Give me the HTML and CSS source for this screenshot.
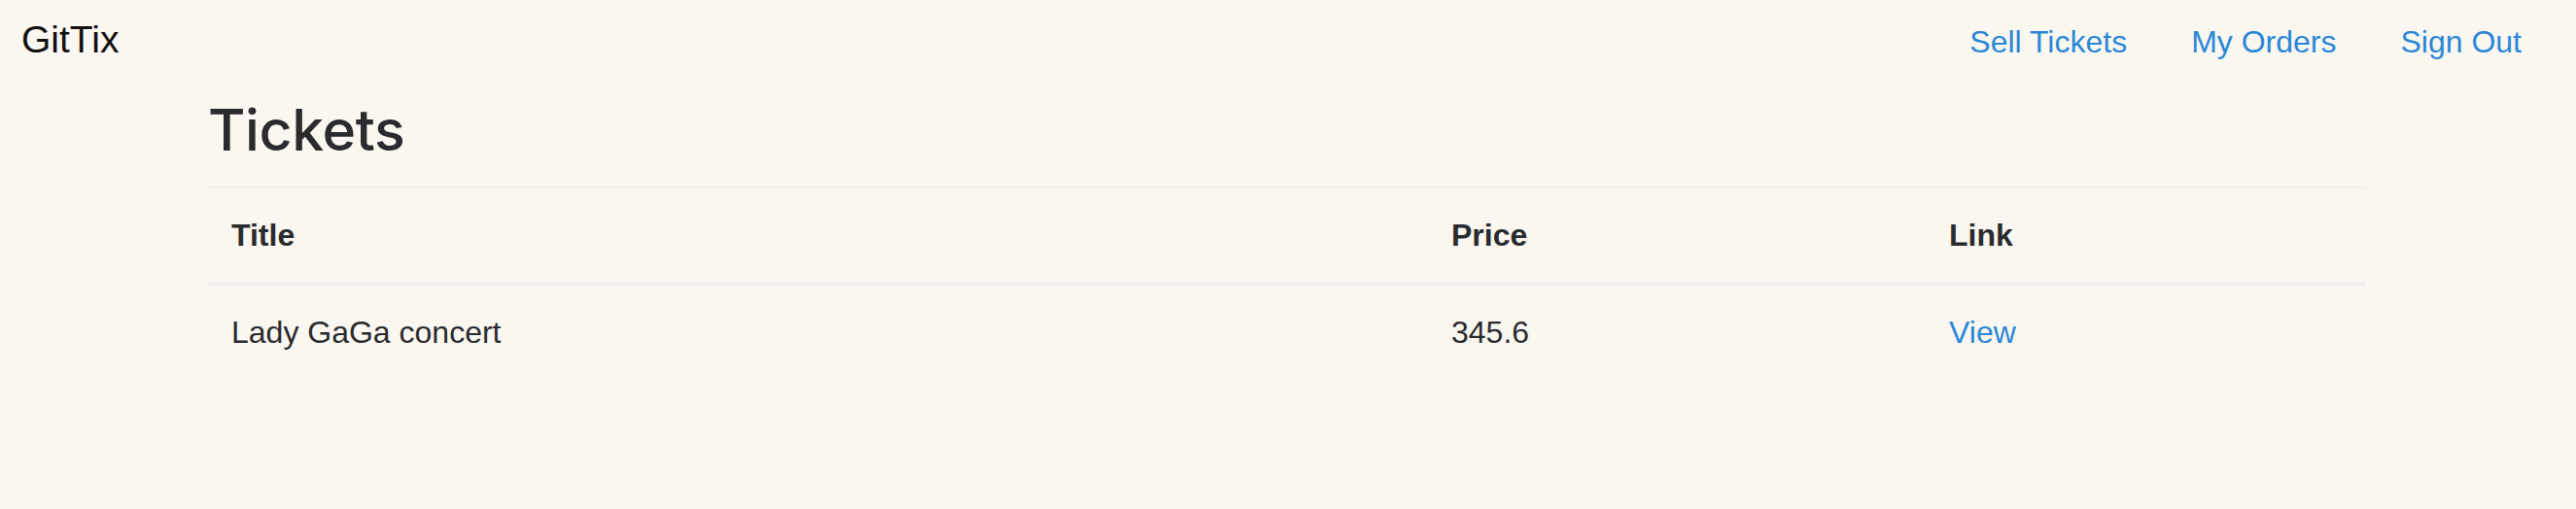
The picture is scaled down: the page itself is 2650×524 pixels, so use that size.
FILE: index.html
```html
<!DOCTYPE html>
<html lang="en">
<head>
<meta charset="utf-8">
<title>GitTix</title>
<link rel="stylesheet" href="styles.css">
</head>
<body>
<nav class="navbar">
  <a class="brand" href="#">GitTix</a>
  <ul class="nav-links">
    <li><a href="#">Sell Tickets</a></li>
    <li><a href="#">My Orders</a></li>
    <li><a href="#">Sign Out</a></li>
  </ul>
</nav>
<main class="container">
  <h1 class="page-title">Tickets</h1>
  <table class="tickets">
    <colgroup>
      <col class="col-title">
      <col class="col-price">
      <col class="col-link">
    </colgroup>
    <thead>
      <tr><th>Title</th><th>Price</th><th>Link</th></tr>
    </thead>
    <tbody>
      <tr><td>Lady GaGa concert</td><td>345.6</td><td><a href="#">View</a></td></tr>
    </tbody>
  </table>
</main>
</body>
</html>
```
FILE: styles.css
```css
html, body {
  margin: 0;
  padding: 0;
}
body {
  background: #faf7f1;
  color: #2a2b2e;
  font-family: "Liberation Sans", Arial, sans-serif;
  font-size: 32px;
  line-height: 48px;
}
a {
  color: #2b87d6;
  text-decoration: none;
}
.navbar {
  display: flex;
  justify-content: space-between;
  align-items: baseline;
  padding: 17px 24px 33px 22px;
}
.brand {
  color: #111;
  font-size: 39px;
  line-height: 48px;
}
.nav-links {
  display: flex;
  list-style: none;
  margin: 0;
  padding: 0;
}
.nav-links a {
  display: block;
  padding: 0 33px;
}
.nav-links li:last-child a {
  padding-right: 32px;
}
.container {
  max-width: 2220px;
  margin: 0 auto;
  padding: 0 31px 0 29px;
}
.page-title {
  margin: 0 0 25px;
  font-family: "Inter", "Liberation Sans", sans-serif;
  font-size: 59px;
  font-weight: 500;
  line-height: 67.2px;
  letter-spacing: -0.4px;
  color: #2a2b2e;
}
.tickets {
  width: 100%;
  border-collapse: collapse;
  table-layout: fixed;
}
.col-title { width: 1255px; }
.col-price { width: 512px; }
.col-link { width: 453px; }
.tickets th,
.tickets td {
  padding: 24px;
  text-align: left;
  vertical-align: top;
  border-top: 2px solid #f1efea;
}
.tickets th {
  font-weight: 700;
  border-bottom: 4px solid #f1efea;
}
```
